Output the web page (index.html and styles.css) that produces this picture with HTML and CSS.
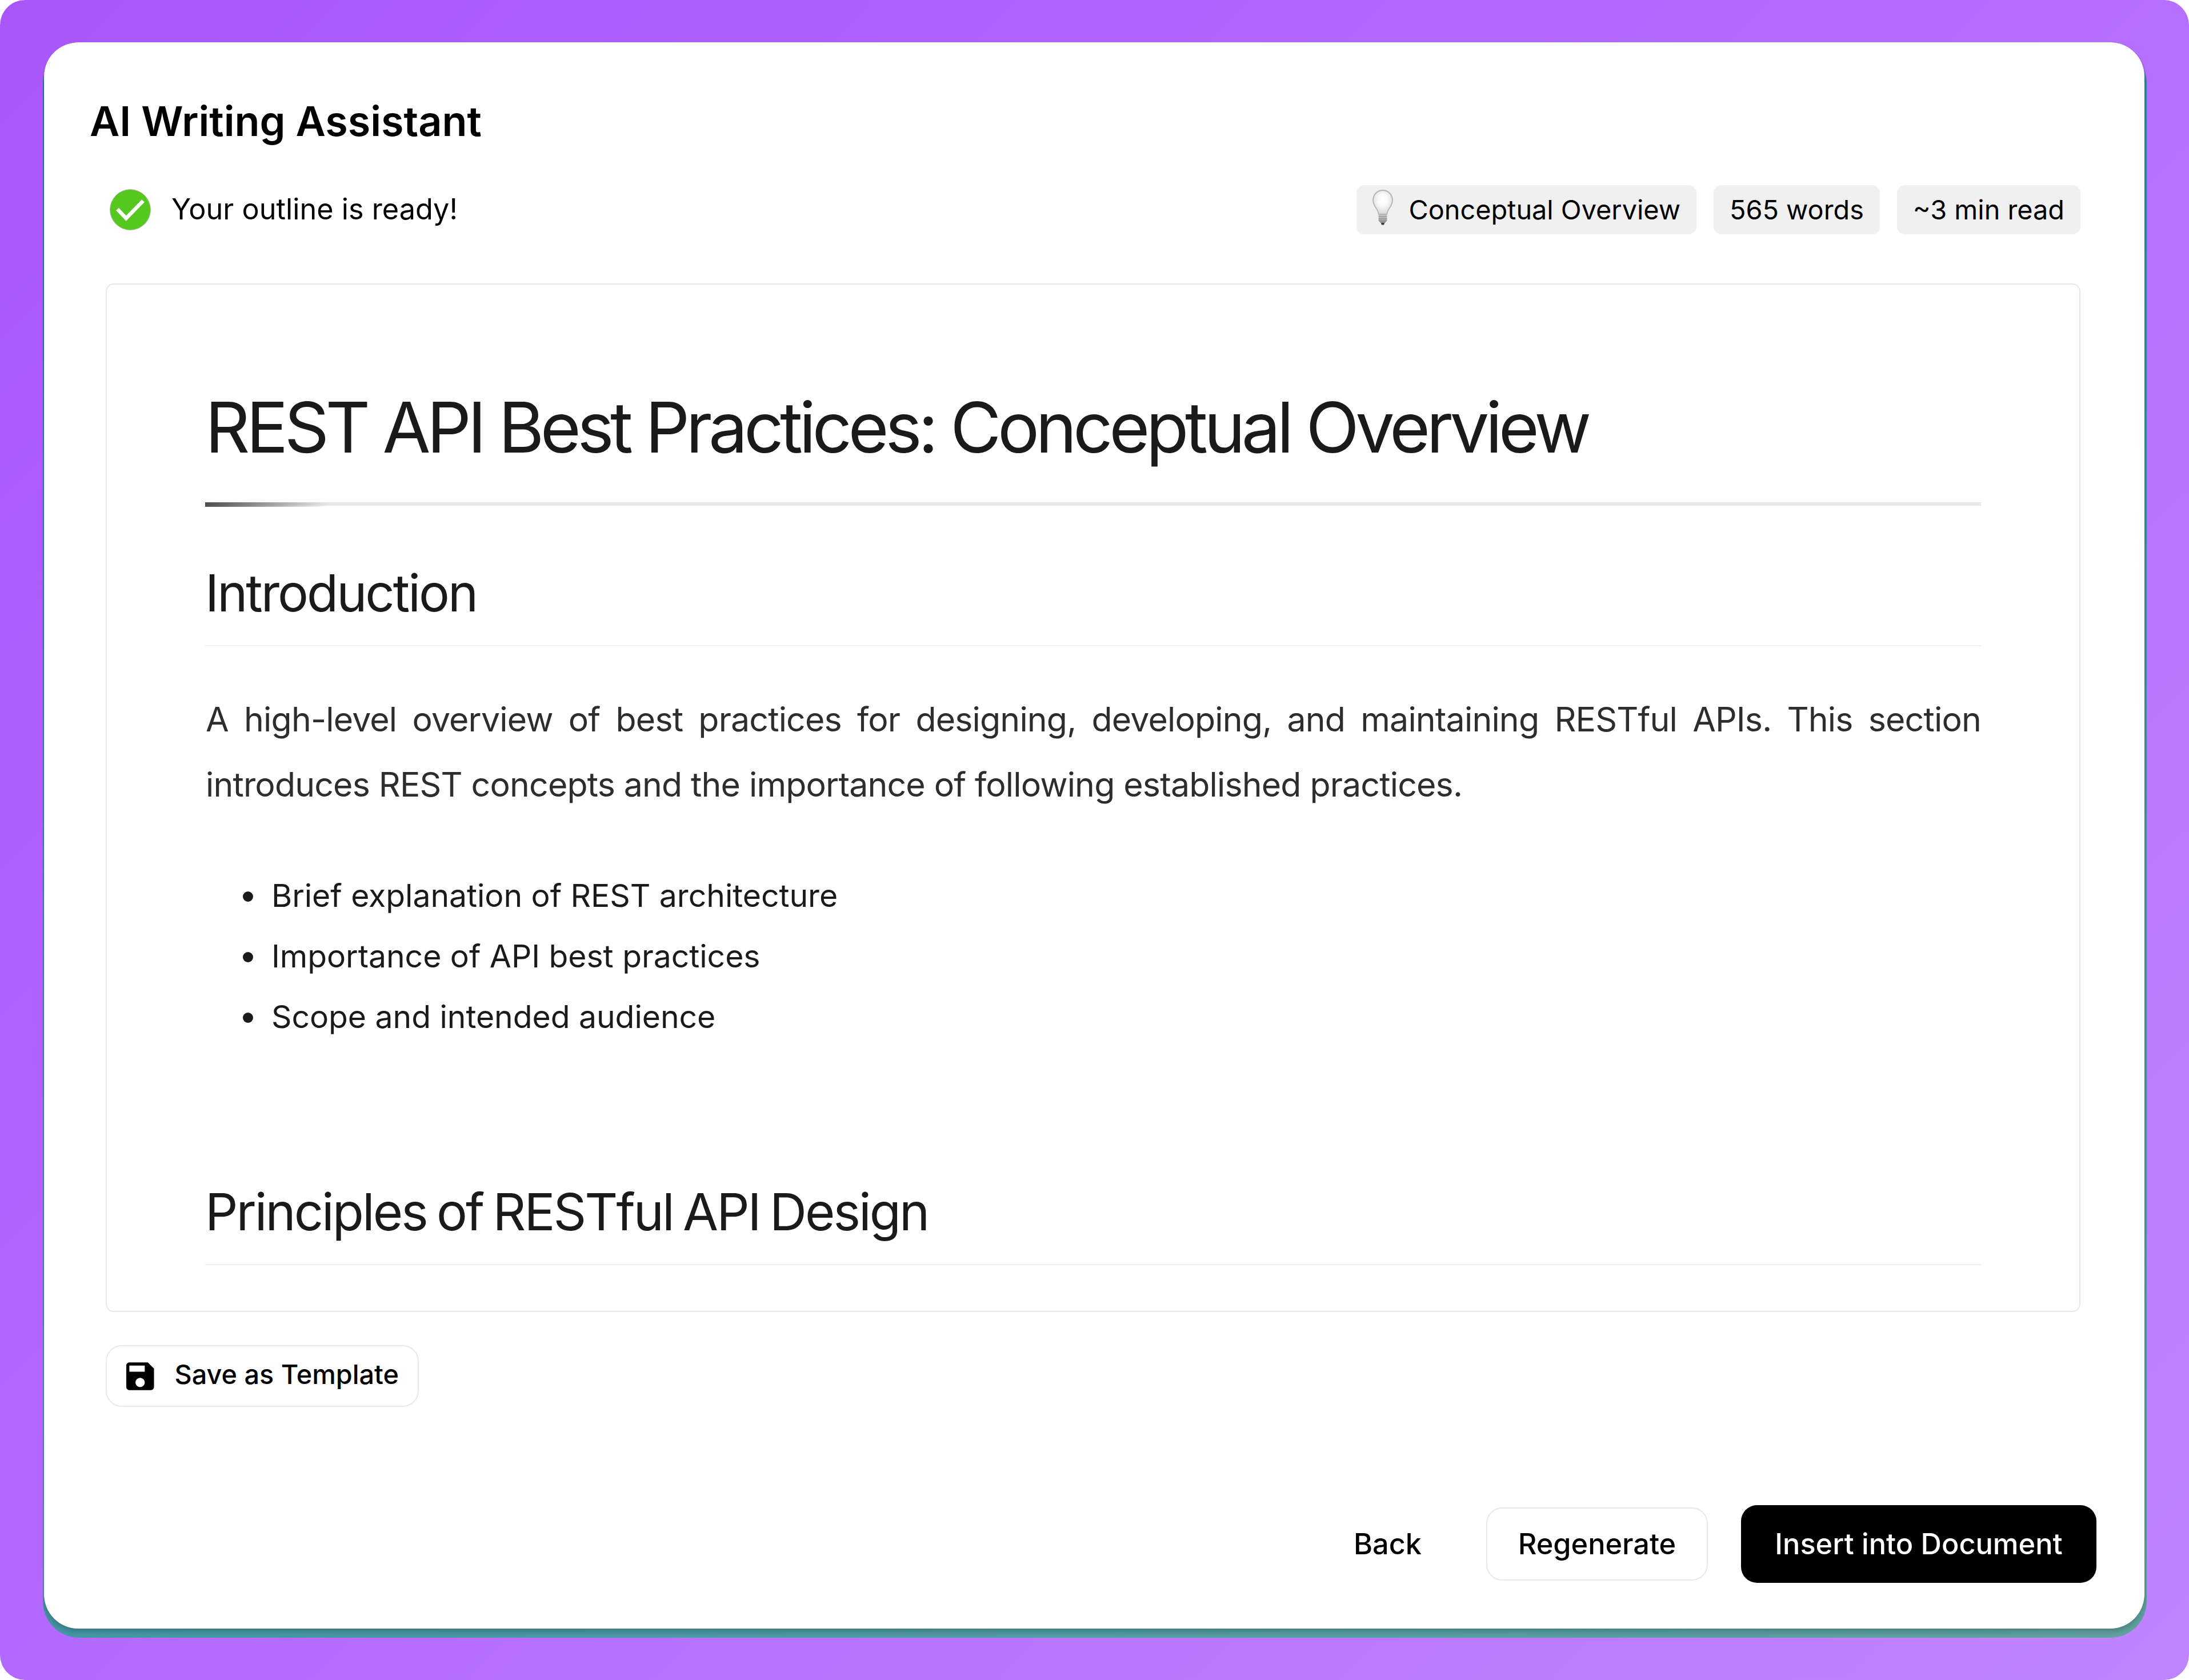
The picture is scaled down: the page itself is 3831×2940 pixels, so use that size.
FILE: index.html
```
<!DOCTYPE html>
<html lang="en">

<head>
    <meta charset="UTF-8">
    <meta name="viewport" content="width=device-width, initial-scale=1.0">
    <title>AI Writing Assistant</title>
    <link rel="stylesheet" href="styles.css">
</head>

<body>
    <div class="backdrop">
        <div class="dialog-edge">
            <main class="dialog">
                <h1 class="dialog-title">AI Writing Assistant</h1>
                <section class="dialog-body">
                    <div class="status-row">
                        <div class="status">
                            <svg class="check-icon" viewBox="0 0 72 72">
                                <circle cx="36" cy="36" r="35.5" fill="#55c71f" stroke="#b5bdb0" stroke-width="1" />
                                <path d="M13.5 35 L28.7 51 L58.5 20.5" fill="none" stroke="#fff" stroke-width="6.6" />
                            </svg>
                            <span class="status-text">Your outline is ready!</span>
                        </div>
                        <div class="tags">
                            <span class="tag">
                                <svg class="bulb-icon" viewBox="0 0 36 62">
                                    <defs>
                                        <radialGradient id="glass" cx="0.5" cy="0.4" r="0.6">
                                            <stop offset="0" stop-color="#fff" />
                                            <stop offset="0.4" stop-color="#fafafa" />
                                            <stop offset="1" stop-color="#d6d6d6" />
                                        </radialGradient>
                                        <linearGradient id="socket" x1="0" y1="0" x2="0" y2="1">
                                            <stop offset="0" stop-color="#d2d2d2" />
                                            <stop offset="1" stop-color="#8c8c8c" />
                                        </linearGradient>
                                    </defs>
                                    <path d="M14.5 57h7l-1.5 4.5h-4z" fill="#3c3c3c" />
                                    <path d="M10.5 42h15v12l-3.5 4h-8l-3.5-4z" fill="url(#socket)" />
                                    <path d="M11 46.5h14M11 50.5h14M11.5 54.5h13" stroke="#999" stroke-width="1" />
                                    <path d="M18 1C8.5 1 1 8.5 1 18.5c0 6 2.5 9.5 5.5 14 2.5 3.7 4 7.5 4.5 10.5h14c.5-3 2-6.8 4.5-10.5 3-4.5 5.5-8 5.5-14C35 8.5 27.5 1 18 1z" fill="url(#glass)" stroke="#b4b4b4" stroke-width="1.8" />
                                </svg>
                                Conceptual Overview
                            </span>
                            <span class="tag">565 words</span>
                            <span class="tag">~3 min read</span>
                        </div>
                    </div>
                    <article class="outline">
                        <h1>REST API Best Practices: Conceptual Overview</h1>
                        <h2>Introduction</h2>
                        <p>A high-level overview of best practices for designing, developing, and maintaining RESTful APIs. This section introduces REST concepts and the importance of following established practices.</p>
                        <ul>
                            <li>Brief explanation of REST architecture</li>
                            <li>Importance of API best practices</li>
                            <li>Scope and intended audience</li>
                        </ul>
                        <h2>Principles of RESTful API Design</h2>
                    </article>
                    <button class="btn btn-save" type="button">
                        <svg class="save-icon" viewBox="3 3 18 18">
                            <path d="M17 3H5c-1.11 0-2 .9-2 2v14c0 1.1.89 2 2 2h14c1.1 0 2-.9 2-2V7l-4-4zm-5 16c-1.66 0-3-1.34-3-3s1.34-3 3-3 3 1.34 3 3-1.34 3-3 3zm3-10H5V5h10v4z" />
                        </svg>
                        Save as Template
                    </button>
                </section>
                <footer class="actions">
                    <button class="btn btn-text" type="button">Back</button>
                    <button class="btn btn-outline" type="button">Regenerate</button>
                    <button class="btn btn-primary" type="button">Insert into Document</button>
                </footer>
            </main>
        </div>
    </div>
</body>

</html>
```
FILE: styles.css
```
* {
    box-sizing: border-box;
}
body {
    margin: 0;
    background-color: #fff;
    color: #000;
    font-family: Inter, "Liberation Sans", sans-serif;
}
.backdrop {
    width: 3831px;
    height: 2940px;
    padding: 84px 74px 74px 75px;
    border-radius: 44px;
    background: linear-gradient(135deg, #a956f9 0%, #b46cff 50%, #c084ff 100%);
}
/* teal edge that shows along the sides and bottom of the dialog */
.dialog-edge {
    display: flex;
    height: 2782px;
    padding: 0 4px 16px 2px;
    border-radius: 63px;
    background: linear-gradient(159deg, #0f80b0 0%, #60a3a0 100%);
    clip-path: inset(-10px 0 0 0 round 63px);
}
.dialog {
    display: flex;
    flex-direction: column;
    flex: 1;
    margin-top: -10px;
    padding: 98px 84px 80px 80px;
    border-radius: 60px;
    background-color: #fff;
    box-shadow: 0 4px 12px rgba(0, 0, 0, 0.25);
}
.dialog-title {
    margin: 0 0 72px;
    font-size: 71.9px;
    font-weight: 600;
    line-height: 80px;
}
.dialog-body {
    display: flex;
    flex-direction: column;
    align-items: flex-start;
    padding: 0 28px;
}
.status-row {
    display: flex;
    justify-content: space-between;
    align-items: center;
    width: 100%;
    height: 86px;
    margin-bottom: 86px;
    padding-left: 7px;
}
.status {
    display: flex;
    align-items: center;
    gap: 36px;
}
.check-icon {
    width: 72px;
    height: 72px;
}
.status-text {
    padding-bottom: 4px;
    font-size: 50.4px;
}
.tags {
    display: flex;
    gap: 30px;
}
.tag {
    display: flex;
    align-items: center;
    gap: 28px;
    height: 86px;
    padding: 0 28px;
    border-radius: 14px;
    background-color: #f0f0f0;
    font-size: 46.8px;
}
.bulb-icon {
    width: 36px;
    height: 62px;
    margin-bottom: 9px;
}
.outline {
    width: 100%;
    height: 1800px;
    margin-bottom: 58px;
    padding: 175px 172px 0;
    border: 2px solid #e8e8e8;
    border-radius: 14px;
    color: #1a1a1a;
    overflow: hidden;
}
.outline h1 {
    position: relative;
    margin: 0 0 98px;
    padding-bottom: 56px;
    border-bottom: 6px solid #e8e8e8;
    font-size: 122px;
    font-weight: 400;
    line-height: 150px;
    letter-spacing: -0.0537em;
}
.outline h1::after {
    content: "";
    position: absolute;
    left: 0;
    bottom: -8px;
    width: 216px;
    height: 8px;
    background: linear-gradient(90deg, rgba(26, 26, 26, 0.75), rgba(26, 26, 26, 0));
}
.outline h2 {
    margin: 0 0 71px;
    padding-bottom: 36px;
    border-bottom: 2px solid #f0f0f0;
    font-size: 90px;
    font-weight: 400;
    line-height: 110px;
    letter-spacing: -0.0335em;
    word-spacing: -0.055em;
}
.outline p {
    margin: 0 0 84px;
    padding-left: 1px;
    color: #2d2d2d;
    font-size: 59px;
    line-height: 114px;
    letter-spacing: -0.0141em;
    text-align: justify;
}
.outline ul {
    margin: 0 0 234px;
    padding-left: 109px;
    font-size: 55.3px;
    line-height: 106px;
    letter-spacing: -0.001em;
}
.outline li {
    padding-left: 7px;
}
.btn {
    display: flex;
    justify-content: center;
    align-items: center;
    border: 2px solid transparent;
    border-radius: 28px;
    background-color: #fff;
    color: #000;
    font-family: inherit;
    font-size: 50.4px;
    font-weight: 500;
    cursor: pointer;
}
.btn-save {
    gap: 36px;
    width: 548px;
    height: 108px;
    padding: 0 33px 6px 34px;
    border-color: #e8e8e8;
    font-size: 46.8px;
    white-space: nowrap;
}
.save-icon {
    width: 49px;
    height: 49px;
    margin-top: 6px;
}
.actions {
    display: flex;
    justify-content: flex-end;
    align-items: center;
    gap: 58px;
    margin-top: auto;
}
.btn-text {
    padding: 0 53px 2px;
}
.btn-outline {
    width: 388px;
    height: 128px;
    padding-bottom: 3px;
    border-color: #e8e8e8;
}
.btn-primary {
    width: 622px;
    height: 136px;
    padding-bottom: 3px;
    background-color: #000;
    color: #fff;
}
```
